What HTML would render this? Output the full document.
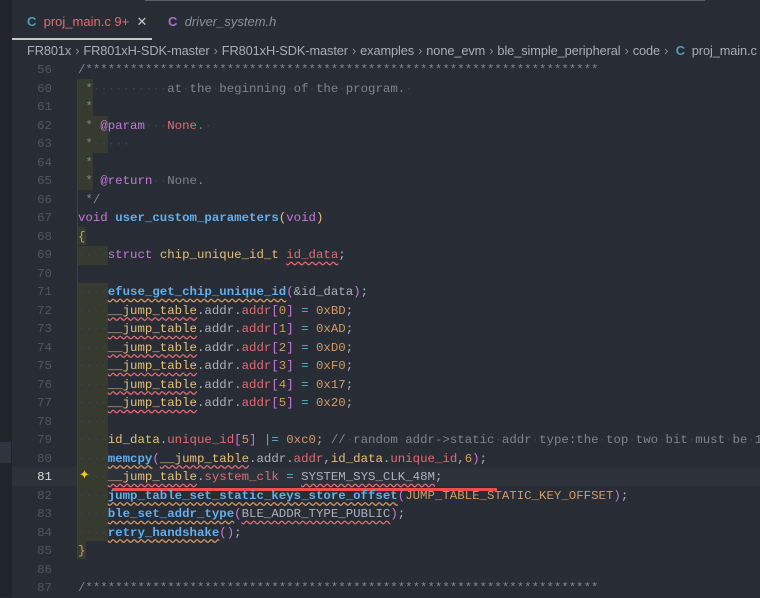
<!DOCTYPE html>
<html><head><meta charset="utf-8"><style>
*{margin:0;padding:0;box-sizing:border-box}
body{width:760px;height:597px;background:#282c34;overflow:hidden;position:relative;font-family:"Liberation Sans",sans-serif}
.strip{position:absolute;left:0;top:0;width:12px;height:597px;background:#21252b}
.strip2{position:absolute;left:0;top:442px;width:11px;height:21px;background:#2f343e}
.topline{position:absolute;left:145px;top:0;width:560px;height:1px;background:#5a5f68}
.tab{position:absolute;top:14px;font-size:13px;white-space:nowrap}
.uline{position:absolute;left:12px;top:38px;width:140px;height:2px;background:#c8c8c8}
.bc{position:absolute;left:27px;top:43px;font-size:12.8px;color:#a9adb5;white-space:nowrap;letter-spacing:-0.1px}
.bc i{font-style:normal;color:#8a8f98;margin:0 4px}
.ln{position:absolute;left:12px;width:40px;text-align:right;font-family:"Liberation Mono",monospace;font-size:12.4px;color:#4f5562}
.row{position:absolute;left:78px;font-family:"Liberation Mono",monospace;font-size:12.4px;color:#abb2bf;white-space:pre;line-height:18.5px;height:18.5px}
.ind{position:absolute;background:#363a2f}
.c{color:#7f848e}.k{color:#c678dd}.f{color:#61afef;font-weight:bold}.t{color:#e5c07b}.v{color:#e06c75}.n{color:#d19a66}.o{color:#56b6c2}.d{color:#3e4450}
.w{text-decoration:underline wavy #e06c75;text-underline-offset:3px}
.wy{text-decoration:underline wavy #d19a66;text-underline-offset:3px}
.hl{position:absolute;left:12px;top:467px;width:748px;height:18.5px;background:#2c313a}
</style></head><body>
<div class="strip"></div><div class="strip2"></div><div class="topline"></div>
<div class="tab" style="left:27px"><b style="color:#519aba">C</b>&nbsp;&nbsp;<span style="color:#e06c75">proj_main.c 9+</span>&nbsp;&nbsp;<span style="color:#c5c5c5">✕</span></div>
<div class="tab" style="left:168px"><b style="color:#a074c4">C</b>&nbsp;&nbsp;<span style="color:#8a8f98;font-style:italic">driver_system.h</span></div>
<div class="uline"></div>
<div class="bc">FR801x<i>›</i>FR801xH-SDK-master<i>›</i>FR801xH-SDK-master<i>›</i>examples<i>›</i>none_evm<i>›</i>ble_simple_peripheral<i>›</i>code<i>›</i> <b style="color:#519aba">C</b>&nbsp; proj_main.c</div>

<div class="hl"></div>
<div style="position:absolute;left:77px;top:79px;width:1px;height:480px;background:#3b3f47"></div>
<div class="ind" style="left:78px;top:79px;width:15px;height:37px"></div>
<div class="ind" style="left:78px;top:116px;width:30px;height:37px"></div>
<div class="ind" style="left:78px;top:153px;width:15px;height:37px"></div>
<div class="ind" style="left:78px;top:227px;width:8px;height:18px"></div>
<div class="ind" style="left:78px;top:246px;width:30px;height:18.5px"></div>
<div class="ind" style="left:78px;top:283px;width:30px;height:258px"></div>
<div class="ind" style="left:78px;top:541px;width:8px;height:18px"></div>
<div style="position:absolute;left:112px;top:488px;width:385px;height:3px;background:#f14c4c;border-radius:1px"></div>
<div style="position:absolute;left:79px;top:467px;color:#f5c518;font-size:13px">✦</div>

<div class="ln" style="top:61px;line-height:18.5px">56</div>
<div class="row" style="top:61px"><span class="c">/*********************************************************************</span></div>
<div class="ln" style="top:79.5px;line-height:18.5px">60</div>
<div class="row" style="top:79.5px"><span class="c"> *<span class="d">··········</span>at<span class="d">·</span>the<span class="d">·</span>beginning<span class="d">·</span>of<span class="d">·</span>the<span class="d">·</span>program.<span class="d">·</span></span></div>
<div class="ln" style="top:98px;line-height:18.5px">61</div>
<div class="row" style="top:98px"><span class="c"> *</span></div>
<div class="ln" style="top:116.5px;line-height:18.5px">62</div>
<div class="row" style="top:116.5px"><span class="c"> * </span><span class="k">@param</span><span class="d">···</span><span class="v">None</span><span class="c">.</span><span class="d">·</span></div>
<div class="ln" style="top:135px;line-height:18.5px">63</div>
<div class="row" style="top:135px"><span class="c"> *</span><span class="d">·····</span></div>
<div class="ln" style="top:153.5px;line-height:18.5px">64</div>
<div class="row" style="top:153.5px"><span class="c"> *</span></div>
<div class="ln" style="top:172px;line-height:18.5px">65</div>
<div class="row" style="top:172px"><span class="c"> * </span><span class="k">@return</span><span class="d">··</span><span class="c">None.</span></div>
<div class="ln" style="top:190.5px;line-height:18.5px">66</div>
<div class="row" style="top:190.5px"><span class="c"> */</span></div>
<div class="ln" style="top:209px;line-height:18.5px">67</div>
<div class="row" style="top:209px"><span class="k">void</span> <span class="f">user_custom_parameters</span><span class="t">(</span><span class="k">void</span><span class="t">)</span></div>
<div class="ln" style="top:227.5px;line-height:18.5px">68</div>
<div class="row" style="top:227.5px"><span class="n">{</span></div>
<div class="ln" style="top:246px;line-height:18.5px">69</div>
<div class="row" style="top:246px"><span class="d">····</span><span class="k">struct</span> <span class="t">chip_unique_id_t</span> <span class="v w">id_data</span>;</div>
<div class="ln" style="top:264.5px;line-height:18.5px">70</div>
<div class="ln" style="top:283px;line-height:18.5px">71</div>
<div class="row" style="top:283px"><span class="d">····</span><span class="f wy">efuse_get_chip_unique_id</span><span class="k">(</span>&amp;id_data<span class="k">)</span>;</div>
<div class="ln" style="top:301.5px;line-height:18.5px">72</div>
<div class="row" style="top:301.5px"><span class="d">····</span><span class="t w">__jump_table</span>.addr.<span class="v">addr</span><span class="k">[</span><span class="n">0</span><span class="k">]</span> <span class="o">=</span> <span class="n">0xBD</span>;</div>
<div class="ln" style="top:320px;line-height:18.5px">73</div>
<div class="row" style="top:320px"><span class="d">····</span><span class="t w">__jump_table</span>.addr.<span class="v">addr</span><span class="k">[</span><span class="n">1</span><span class="k">]</span> <span class="o">=</span> <span class="n">0xAD</span>;</div>
<div class="ln" style="top:338.5px;line-height:18.5px">74</div>
<div class="row" style="top:338.5px"><span class="d">····</span><span class="t w">__jump_table</span>.addr.<span class="v">addr</span><span class="k">[</span><span class="n">2</span><span class="k">]</span> <span class="o">=</span> <span class="n">0xD0</span>;</div>
<div class="ln" style="top:357px;line-height:18.5px">75</div>
<div class="row" style="top:357px"><span class="d">····</span><span class="t w">__jump_table</span>.addr.<span class="v">addr</span><span class="k">[</span><span class="n">3</span><span class="k">]</span> <span class="o">=</span> <span class="n">0xF0</span>;</div>
<div class="ln" style="top:375.5px;line-height:18.5px">76</div>
<div class="row" style="top:375.5px"><span class="d">····</span><span class="t w">__jump_table</span>.addr.<span class="v">addr</span><span class="k">[</span><span class="n">4</span><span class="k">]</span> <span class="o">=</span> <span class="n">0x17</span>;</div>
<div class="ln" style="top:394px;line-height:18.5px">77</div>
<div class="row" style="top:394px"><span class="d">····</span><span class="t w">__jump_table</span>.addr.<span class="v">addr</span><span class="k">[</span><span class="n">5</span><span class="k">]</span> <span class="o">=</span> <span class="n">0x20</span>;</div>
<div class="ln" style="top:412.5px;line-height:18.5px">78</div>
<div class="row" style="top:412.5px"><span class="d">····</span></div>
<div class="ln" style="top:431px;line-height:18.5px">79</div>
<div class="row" style="top:431px"><span class="d">····</span><span class="t">id_data</span>.<span class="v">unique_id</span><span class="k">[</span><span class="n">5</span><span class="k">]</span> <span class="o">|=</span> <span class="n">0xc0</span>; <span class="c">//<span class="d">·</span>random<span class="d">·</span>addr-&gt;static<span class="d">·</span>addr<span class="d">·</span>type:the<span class="d">·</span>top<span class="d">·</span>two<span class="d">·</span>bit<span class="d">·</span>must<span class="d">·</span>be<span class="d">·</span>1</span></div>
<div class="ln" style="top:449.5px;line-height:18.5px">80</div>
<div class="row" style="top:449.5px"><span class="d">····</span><span class="f wy">memcpy</span><span class="k">(</span><span class="t w">__jump_table</span>.addr.<span class="v">addr</span>,<span class="t">id_data</span>.<span class="v">unique_id</span>,<span class="n">6</span><span class="k">)</span>;</div>
<div class="ln" style="top:468px;line-height:18.5px;color:#d7dae0">81</div>
<div class="row" style="top:468px"><span class="d">····</span><span class="t w">__jump_table</span>.<span class="v">system_clk</span> <span class="o">=</span> <span class="w" style="color:#abb2bf">SYSTEM_SYS_CLK_48M</span>;</div>
<div class="ln" style="top:486.5px;line-height:18.5px">82</div>
<div class="row" style="top:486.5px"><span class="d">····</span><span class="f wy">jump_table_set_static_keys_store_offset</span><span class="k">(</span><span class="n">JUMP_TABLE_STATIC_KEY_OFFSET</span><span class="k">)</span>;</div>
<div class="ln" style="top:505px;line-height:18.5px">83</div>
<div class="row" style="top:505px"><span class="d">····</span><span class="f wy">ble_set_addr_type</span><span class="k">(</span><span class="w">BLE_ADDR_TYPE_PUBLIC</span><span class="k">)</span>;</div>
<div class="ln" style="top:523.5px;line-height:18.5px">84</div>
<div class="row" style="top:523.5px"><span class="d">····</span><span class="f wy">retry_handshake</span><span class="k">()</span>;</div>
<div class="ln" style="top:542px;line-height:18.5px">85</div>
<div class="row" style="top:542px"><span class="n">}</span></div>
<div class="ln" style="top:560.5px;line-height:18.5px">86</div>
<div class="ln" style="top:579px;line-height:18.5px">87</div>
<div class="row" style="top:579px"><span class="c">/*********************************************************************</span></div>
</body></html>
